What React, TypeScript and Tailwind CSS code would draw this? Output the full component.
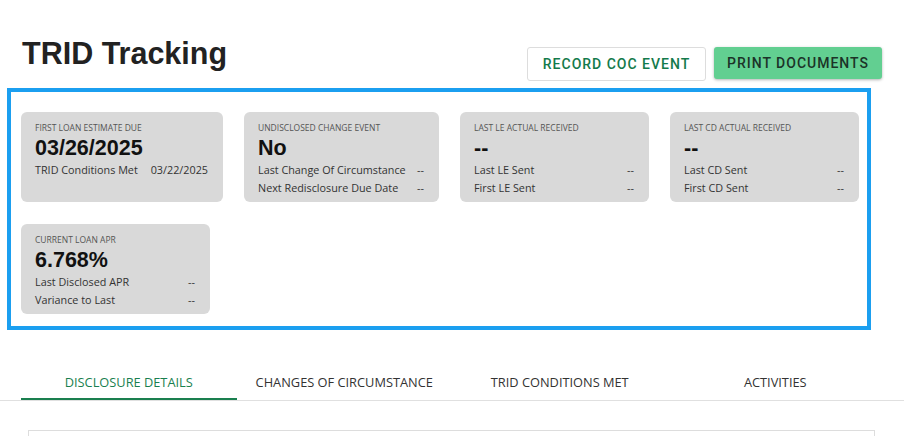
import React from "react";

type Row = { label: string; value: string };
type Card = { title: string; value: string; rows: Row[]; width: number };

const cards: Card[] = [
  {
    title: "FIRST LOAN ESTIMATE DUE",
    value: "03/26/2025",
    rows: [{ label: "TRID Conditions Met", value: "03/22/2025" }],
    width: 202,
  },
  {
    title: "UNDISCLOSED CHANGE EVENT",
    value: "No",
    rows: [
      { label: "Last Change Of Circumstance", value: "--" },
      { label: "Next Redisclosure Due Date", value: "--" },
    ],
    width: 195,
  },
  {
    title: "LAST LE ACTUAL RECEIVED",
    value: "--",
    rows: [
      { label: "Last LE Sent", value: "--" },
      { label: "First LE Sent", value: "--" },
    ],
    width: 189,
  },
  {
    title: "LAST CD ACTUAL RECEIVED",
    value: "--",
    rows: [
      { label: "Last CD Sent", value: "--" },
      { label: "First CD Sent", value: "--" },
    ],
    width: 189,
  },
  {
    title: "CURRENT LOAN APR",
    value: "6.768%",
    rows: [
      { label: "Last Disclosed APR", value: "--" },
      { label: "Variance to Last", value: "--" },
    ],
    width: 189,
  },
];

const tabs = [
  "DISCLOSURE DETAILS",
  "CHANGES OF CIRCUMSTANCE",
  "TRID CONDITIONS MET",
  "ACTIVITIES",
];

const uiFont = { fontFamily: '"Open Sans", "Noto Sans", sans-serif' };

function StatCard({ card }: { card: Card }) {
  return (
    <div
      className="h-[90px] rounded-[6px] bg-[#d9d9d9] pl-[14px] pr-[15px] pt-[9px]"
      style={{ width: card.width, ...uiFont }}
    >
      <div className="text-[8.5px] leading-[14px] text-[#555555]">{card.title}</div>
      <div className="mt-[1px] font-['Liberation_Sans',Arial,sans-serif] text-[21.5px] font-bold leading-[24px] text-[#111111]">
        {card.value}
      </div>
      <div className="mt-[1px]">
        {card.rows.map((r) => (
          <div
            key={r.label}
            className="flex justify-between gap-[8px] whitespace-nowrap text-[10.8px] leading-[18px] text-[#333333]"
          >
            <span>{r.label}</span>
            <span>{r.value}</span>
          </div>
        ))}
      </div>
    </div>
  );
}

export default function App() {
  return (
    <div className="relative h-[436px] w-full overflow-hidden bg-white pt-[35px]">
      <div className="flex items-start justify-between px-[22px]">
        <h1 className="font-['Liberation_Sans',Arial,sans-serif] text-[30.5px] font-bold leading-[36px] text-[#222222]">
          TRID Tracking
        </h1>
        <div className="mt-[12px] flex items-start gap-[8px] font-['Roboto',sans-serif]">
          <button className="h-[34px] w-[179px] rounded-[3px] border border-[#dddddd] bg-white text-[14px] font-medium tracking-[1px] text-[#137a4b]">
            RECORD COC EVENT
          </button>
          <button className="h-[32px] w-[168px] rounded-[3px] bg-[#62cf91] text-[14px] font-medium tracking-[1px] text-[#1c3328] shadow-[0_1px_3px_rgba(0,0,0,0.3)]">
            PRINT DOCUMENTS
          </button>
        </div>
      </div>

      <div className="ml-[7px] mt-[7px] h-[242px] w-[864px] border-4 border-[#1b9ff0] pl-[10px] pt-[20px]">
        <div className="flex flex-wrap gap-x-[21px] gap-y-[22px]">
          {cards.map((c) => (
            <StatCard key={c.title} card={c} />
          ))}
        </div>
      </div>

      <div className="border-b border-[#e0e0e0]" style={uiFont}>
        <div className="ml-[21px] flex w-[862px]">
          {tabs.map((t, i) => (
            <div
              key={t}
              className={
                i === 0
                  ? "flex-1 border-b-2 border-[#1a7f4f] pb-[8px] pt-[44px] text-center text-[12.8px] font-medium leading-[16px] text-[#1a7f4f]"
                  : "flex-1 border-b-2 border-transparent pb-[8px] pt-[44px] text-center text-[12.8px] font-medium leading-[16px] text-[#333333]"
              }
            >
              {t}
            </div>
          ))}
        </div>
      </div>

      <div className="ml-[28px] mt-[29px] h-[6px] w-[847px] border border-b-0 border-[#dddddd]" />
    </div>
  );
}
